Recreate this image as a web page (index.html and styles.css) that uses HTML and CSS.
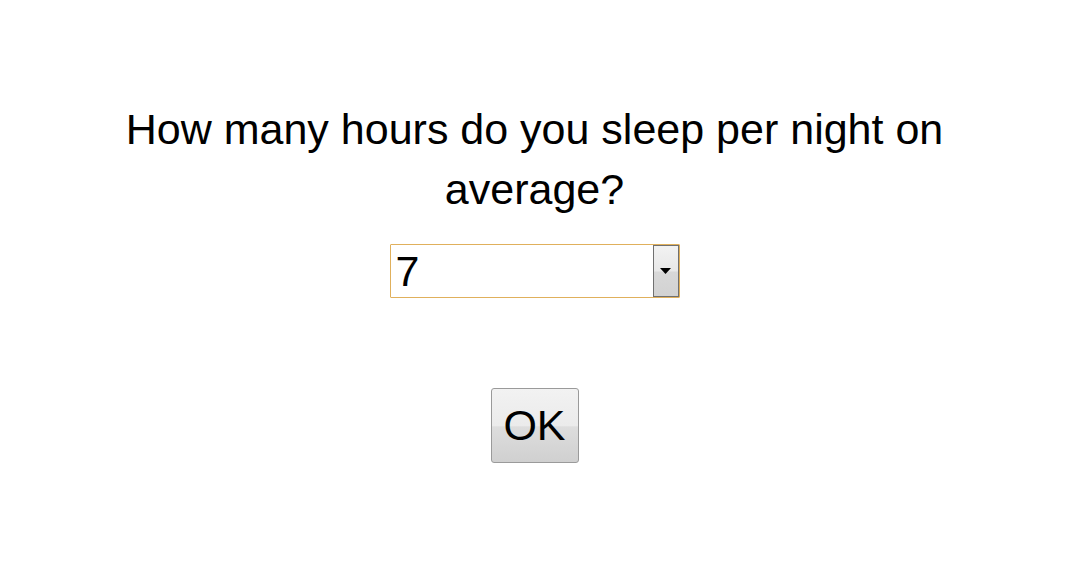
FILE: index.html
```html
<!DOCTYPE html>
<html>
<head>
<meta charset="utf-8">
<link rel="stylesheet" href="styles.css">
</head>
<body>
<div class="page">
  <div class="question">How many hours do you sleep per night on average?</div>
  <div class="select">
    <span class="value">7</span>
    <span class="arrow"><svg width="11" height="6" viewBox="0 0 11 6"><path d="M0 0H11L5.5 6Z" fill="#000"/></svg></span>
  </div>
  <button class="ok">OK</button>
</div>
</body>
</html>
```
FILE: styles.css
```css
html, body {
  margin: 0;
  background: #fff;
}
body {
  font-family: "Liberation Sans", Arial, sans-serif;
  color: #000;
}
.page {
  width: 1069px;
  padding-top: 99px;
  display: flex;
  flex-direction: column;
  align-items: center;
}
.question {
  width: 860px;
  text-align: center;
  font-size: 43px;
  line-height: 60px;
}
.select {
  margin-top: 25px;
  width: 288px;
  height: 52px;
  border: 1px solid #e0b05c;
  border-radius: 1px;
  display: flex;
  align-items: stretch;
  background: #fff;
  box-sizing: content-box;
}
.value {
  flex: 1;
  font-size: 43px;
  line-height: 52px;
  padding-left: 5px;
}
.arrow {
  width: 24px;
  border: 1px solid #707070;
  background: linear-gradient(#f2f2f2 0%, #e8e8e8 50%, #d8d8d8 52%, #d2d2d2 100%);
  display: flex;
  align-items: center;
  justify-content: center;
}
.ok {
  margin-top: 90px;
  width: 88px;
  height: 75px;
  border: 1px solid #9a9a9a;
  border-radius: 3px;
  background: linear-gradient(#f2f2f2 0%, #ebebeb 50%, #dddddd 52%, #d0d0d0 100%);
  font-family: "Liberation Sans", Arial, sans-serif;
  font-size: 43px;
  color: #000;
  padding: 0;
}
```
